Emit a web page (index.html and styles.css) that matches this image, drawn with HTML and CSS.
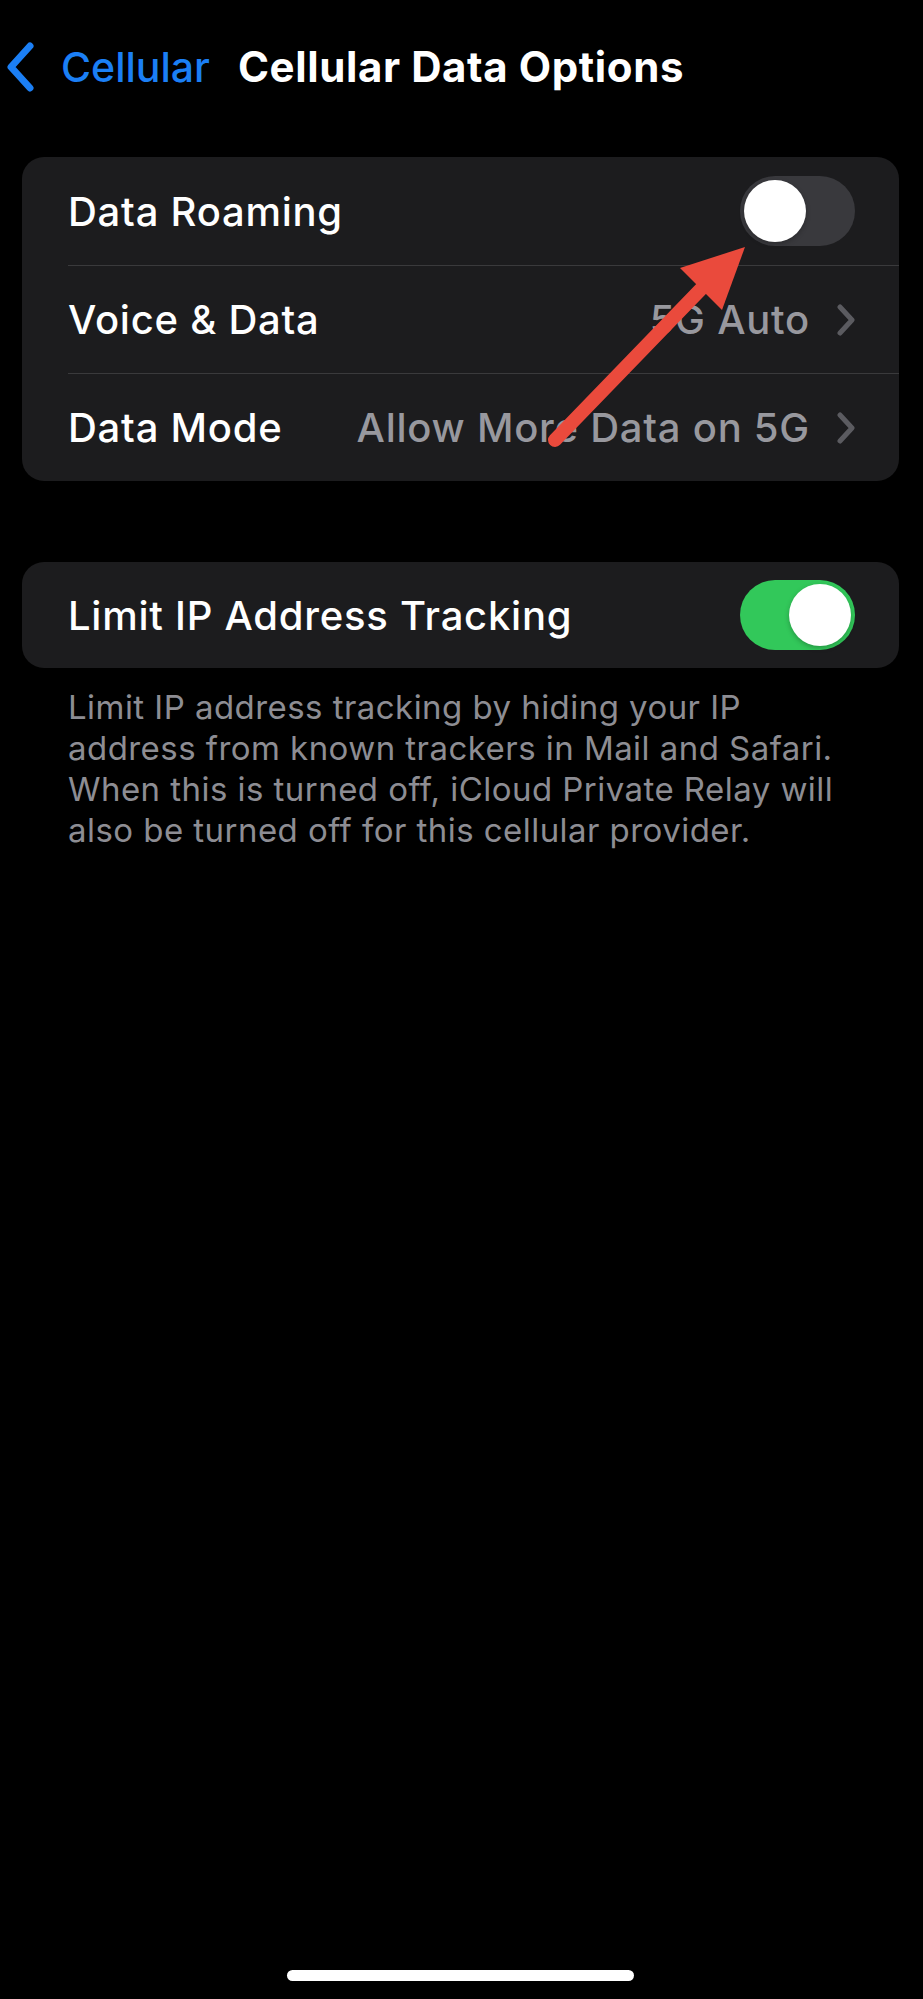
FILE: index.html
```html
<!DOCTYPE html>
<html lang="en">
<head>
<meta charset="utf-8">
<title>Cellular Data Options</title>
<link rel="stylesheet" href="styles.css">
</head>
<body>
<div class="screen">
  <header class="nav">
    <a class="back">
      <svg class="back-icon" width="30" height="50" viewBox="0 0 30 50" aria-hidden="true">
        <path d="M25 4 L6 25 L25 46" fill="none" stroke="#1b7ff5" stroke-width="7" stroke-linecap="round" stroke-linejoin="round"/>
      </svg>
      <span class="back-label">Cellular</span>
    </a>
    <h1 class="title">Cellular Data Options</h1>
  </header>

  <main class="content">
    <section class="group">
      <div class="row">
        <span class="label">Data Roaming</span>
        <span class="switch switch-off"><span class="knob"></span></span>
      </div>
      <div class="row">
        <span class="label">Voice &amp; Data</span>
        <span class="detail">
          <span class="value">5G Auto</span>
          <svg class="chev" width="20" height="32" viewBox="0 0 20 32" aria-hidden="true">
            <path d="M4 3 L16 16 L4 29" fill="none" stroke="#5b5b60" stroke-width="5" stroke-linecap="round" stroke-linejoin="round"/>
          </svg>
        </span>
      </div>
      <div class="row">
        <span class="label">Data Mode</span>
        <span class="detail">
          <span class="value">Allow More Data on 5G</span>
          <svg class="chev" width="20" height="32" viewBox="0 0 20 32" aria-hidden="true">
            <path d="M4 3 L16 16 L4 29" fill="none" stroke="#5b5b60" stroke-width="5" stroke-linecap="round" stroke-linejoin="round"/>
          </svg>
        </span>
      </div>
    </section>

    <section class="group group-single">
      <div class="row">
        <span class="label">Limit IP Address Tracking</span>
        <span class="switch switch-on"><span class="knob"></span></span>
      </div>
    </section>
    <p class="footnote">Limit IP address tracking by hiding your IP<br>address from known trackers in Mail and Safari.<br>When this is turned off, iCloud Private Relay will<br>also be turned off for this cellular provider.</p>
  </main>

  <svg class="callout" width="230" height="240" viewBox="0 0 230 240" aria-hidden="true">
    <line x1="15" y1="210" x2="163" y2="57" stroke="#ea4a3c" stroke-width="14" stroke-linecap="round"/>
    <polygon points="205,17 140,38 158,56 182,80" fill="#ea4a3c"/>
  </svg>

  <div class="home-indicator"></div>
</div>
</body>
</html>
```

FILE: styles.css
```css
html, body {
  margin: 0;
  padding: 0;
  background: #000;
}

body {
  font-family: Inter, "Noto Sans", "Liberation Sans", sans-serif;
  color: #fff;
}

.screen {
  position: relative;
  width: 923px;
  height: 1999px;
  overflow: hidden;
  background: #000;
}

/* Navigation bar */
.nav {
  height: 133px;
  display: flex;
  align-items: center;
  padding-left: 5px;
  box-sizing: border-box;
}

.back {
  display: flex;
  align-items: center;
  gap: 26px;
  color: #1b7ff5;
}

.back-icon {
  display: block;
}

.back-label {
  font-size: 41px;
  font-weight: 500;
  letter-spacing: 0;
}

.title {
  margin: 0 0 0 28px;
  font-size: 42px;
  font-weight: 700;
  letter-spacing: 0.6px;
}

/* Grouped list */
.content {
  padding: 24px 24px 0 22px;
}

.group {
  background: #1c1c1e;
  border-radius: 22px;
  overflow: hidden;
}

.group + .group {
  margin-top: 81px;
}

.row {
  height: 108px;
  margin-left: 46px;
  padding-right: 44px;
  display: flex;
  align-items: center;
  justify-content: space-between;
  box-sizing: border-box;
}

.row + .row {
  border-top: 1px solid #3a3a3c;
}

.group-single .row {
  height: 106px;
}

.label {
  font-size: 40px;
  font-weight: 500;
  letter-spacing: 0.75px;
}

.detail {
  display: flex;
  align-items: center;
  gap: 26px;
}

.value {
  font-size: 40px;
  font-weight: 500;
  color: #98989e;
  letter-spacing: 0.75px;
}

.chev {
  display: block;
  margin-right: -1px;
}

/* Toggle switches */
.switch {
  position: relative;
  width: 115px;
  height: 70px;
  border-radius: 35px;
  flex: none;
}

.switch-off {
  background: #39393d;
}

.switch-on {
  background: #32c85a;
}

.knob {
  position: absolute;
  top: 4px;
  width: 62px;
  height: 62px;
  border-radius: 50%;
  background: #fff;
  box-shadow: 0 2px 5px rgba(0, 0, 0, 0.25);
}

.switch-off .knob {
  left: 4px;
}

.switch-on .knob {
  right: 4px;
}

.footnote {
  margin: 19px 0 0 46px;
  font-size: 33px;
  line-height: 41px;
  color: #8d8d93;
  letter-spacing: 0.45px;
}

/* Annotation arrow drawn over the list */
.callout {
  position: absolute;
  left: 540px;
  top: 230px;
}

.home-indicator {
  position: absolute;
  left: 287px;
  top: 1970px;
  width: 347px;
  height: 11px;
  border-radius: 6px;
  background: #fff;
}
```
